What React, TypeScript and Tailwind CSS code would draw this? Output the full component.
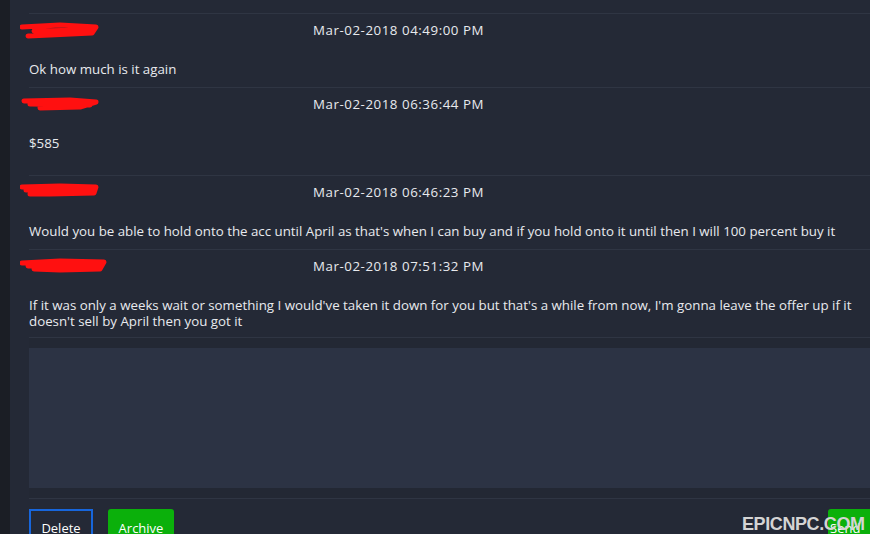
import { ReactNode } from "react";

type Msg = {
  id: number;
  time: string;
  body: string;
  scribble: string;
  extra?: string;
};

const MESSAGES: Msg[] = [
  {
    id: 1,
    time: "Mar-02-2018 04:49:00 PM",
    body: "Ok how much is it again",
    scribble: "M2 6 L40 4 L76 6 L72 12 L30 14 L8 15 M14 10 L70 9",
    extra: "pb-[10px]",
  },
  {
    id: 2,
    time: "Mar-02-2018 06:36:44 PM",
    body: "$585",
    scribble: "M4 6 L50 5 L76 7 L60 12 L20 13 M10 9 L70 10",
    extra: "pb-[24px]",
  },
  {
    id: 3,
    time: "Mar-02-2018 06:46:23 PM",
    body: "Would you be able to hold onto the acc until April as that's when I can buy and if you hold onto it until then I will 100 percent buy it",
    scribble: "M2 4 L40 3 L76 4 L74 10 L30 11 L10 11 M6 7 L72 7",
    extra: "pb-[10px]",
  },
  {
    id: 4,
    time: "Mar-02-2018 07:51:32 PM",
    body: "If it was only a weeks wait or something I would've taken it down for you but that's a while from now, I'm gonna leave the offer up if it doesn't sell by April then you got it",
    scribble: "M2 6 L40 4 L84 5 L80 12 L40 13 L14 12 M8 9 L80 8",
    extra: "pb-[8px]",
  },
];

function Redacted({ d }: { d: string }) {
  return (
    <svg width="90" height="18" viewBox="0 0 90 18" className="-ml-[9px] -mt-[3px]">
      <path d={d} fill="none" stroke="#ff1010" strokeWidth="5" strokeLinecap="round" strokeLinejoin="round" />
    </svg>
  );
}

function Row({ msg }: { msg: Msg }) {
  return (
    <div className={`border-t border-[#2f3543] pt-[7px] ${msg.extra ?? ""}`}>
      <div className="grid grid-cols-[284px_1fr] h-[20px] items-center">
        <Redacted d={msg.scribble} />
        <div className="text-[13.3px] tracking-[0.55px] text-[#e8eaee]">{msg.time}</div>
      </div>
      <div className="mt-[20px] pr-[10px] text-[13.3px] leading-[16px] text-[#e8eaee]">{msg.body}</div>
    </div>
  );
}

function Button({ children, className }: { children: ReactNode; className: string }) {
  return (
    <button className={`h-[30px] text-[13px] text-white ${className}`}>{children}</button>
  );
}

export default function App() {
  return (
    <div
      className="relative flex w-[870px] h-[534px] overflow-hidden bg-[#242936]"
      style={{ fontFamily: "'Open Sans', sans-serif" }}
    >
      <div className="w-[10px] shrink-0 bg-[#1b1e25]" />
      <div className="flex-1 pl-[19px] pt-[13px]">
        {MESSAGES.map((m) => (
          <Row key={m.id} msg={m} />
        ))}
        <div className="border-t border-[#2f3543] pt-[10px] pb-[10px] bg-[#232834]">
          <div className="h-[140px] bg-[#2c3344]" />
        </div>
        <div className="border-t border-[#2f3543] pt-[10px] flex items-start">
          <Button className="w-[64px] border-2 border-[#1766dc] pt-[8px]">Delete</Button>
          <Button className="ml-[15px] w-[66px] rounded-[3px] bg-[#0bb00b] pt-[10px]">Archive</Button>
          <div className="flex-1" />
          <Button className="w-[42px] rounded-l-[3px] bg-[#0bb00b] pt-[10px] pl-[2px] text-left">Send</Button>
        </div>
      </div>
      <div
        className="absolute left-[742px] top-[511px] text-[18px] font-bold text-[#d4d4d4] tracking-[-0.4px]"
        style={{ fontFamily: "'Liberation Sans', Arial, sans-serif" }}
      >
        EPICNPC.COM
      </div>
    </div>
  );
}
